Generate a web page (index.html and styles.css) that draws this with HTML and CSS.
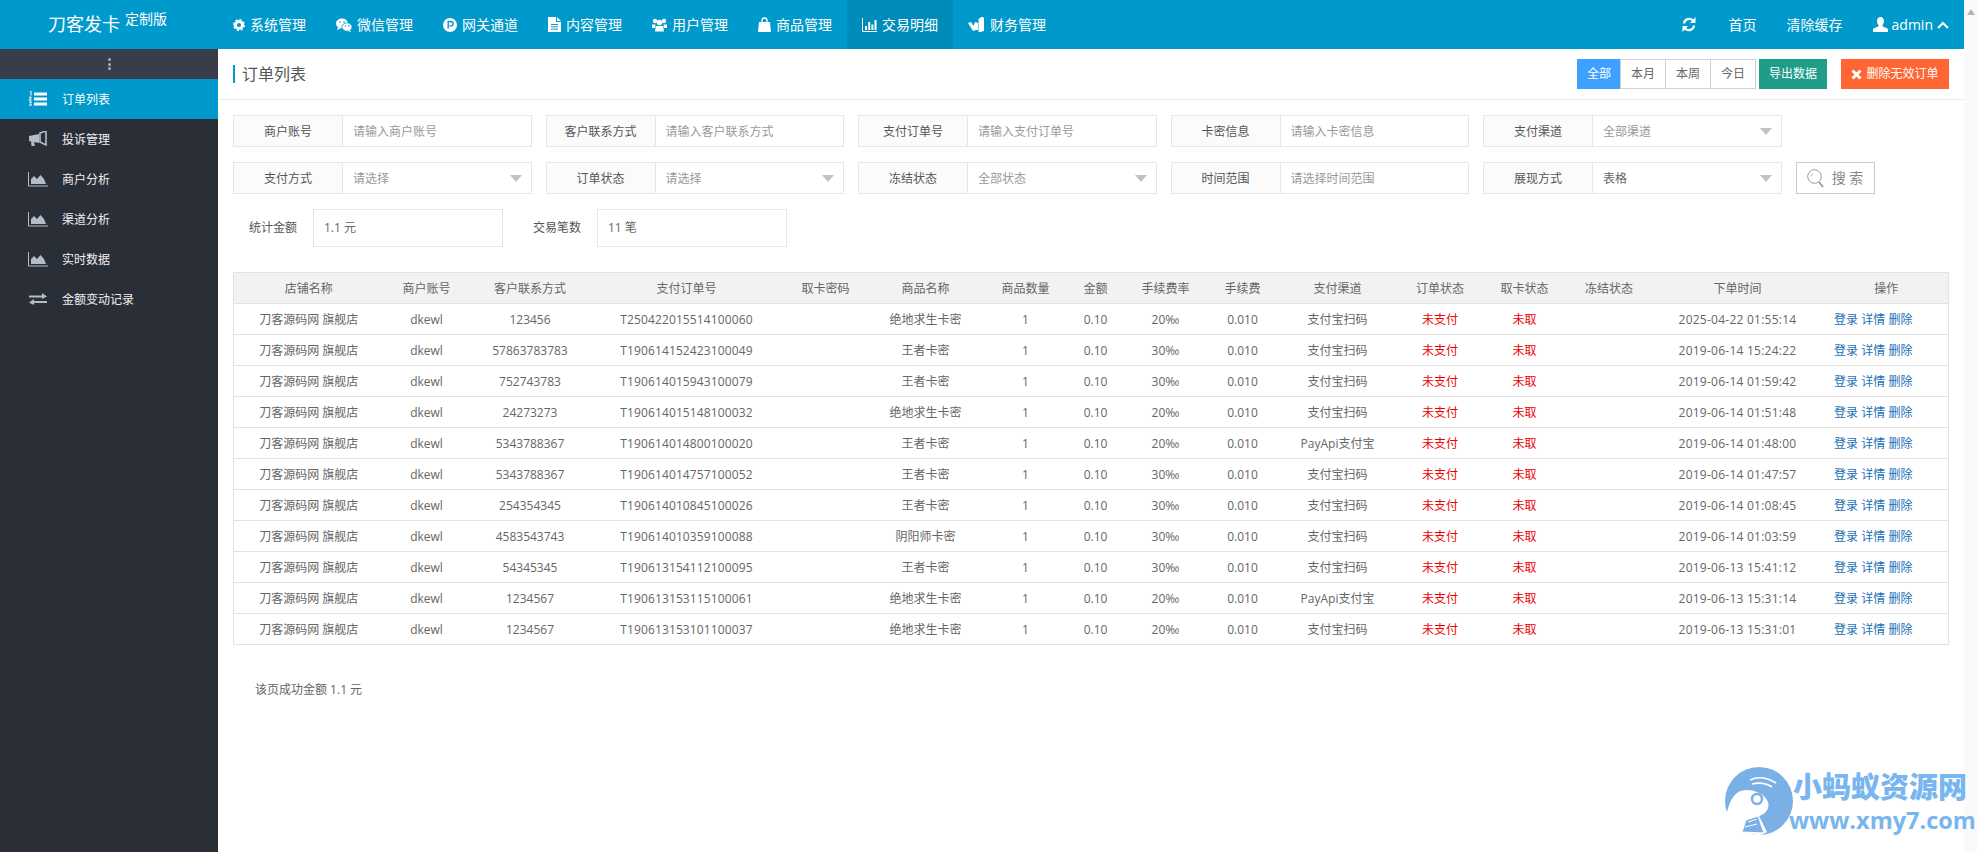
FILE: index.html
```html
<!DOCTYPE html>
<html lang="zh-CN">
<head>
<meta charset="utf-8">
<title>订单列表</title>
<link rel="stylesheet" href="styles.css">
</head>
<body>
<div class="page">
  <header class="topbar">
    <div class="logo"><span class="logo-name">刀客发卡</span><span class="logo-tag">定制版</span></div>
    <nav class="nav">
      <a class="nav-item"><svg class="nav-ico" width="12" height="14" viewBox="0 0 12 14"><circle cx="6" cy="7" r="3.6" fill="none" stroke="#fff" stroke-width="3"/><circle cx="6" cy="7" r="5.4" fill="none" stroke="#fff" stroke-width="1.2" stroke-dasharray="2.2 2"/></svg>系统管理</a>
      <a class="nav-item"><svg class="nav-ico" width="16" height="14" viewBox="0 0 16 14"><ellipse cx="6" cy="5.5" rx="6" ry="5" fill="#fff"/><path d="M2 9l-1 3 3.5-1.6z" fill="#fff"/><ellipse cx="11" cy="9" rx="5" ry="4.2" fill="#fff" stroke="#0099cc" stroke-width=".8"/><path d="M14 12l1 2-3-1z" fill="#fff"/><circle cx="4" cy="4" r=".8" fill="#0099cc"/><circle cx="8" cy="4" r=".8" fill="#0099cc"/><circle cx="9.5" cy="8" r=".7" fill="#0099cc"/><circle cx="12.8" cy="8" r=".7" fill="#0099cc"/></svg>微信管理</a>
      <a class="nav-item"><svg class="nav-ico" width="14" height="14" viewBox="0 0 14 14"><circle cx="7" cy="7" r="7" fill="#fff"/><path d="M5.2 10.5v-7h2.7a2.2 2.2 0 0 1 0 4.4H6.3" fill="none" stroke="#0099cc" stroke-width="1.4"/></svg>网关通道</a>
      <a class="nav-item"><svg class="nav-ico" width="13" height="15" viewBox="0 0 13 15"><path d="M0 0h8v5h5v10H0z" fill="#fff"/><path d="M9 0l4 4H9z" fill="#fff"/><path d="M3 7.500h7M3 9.800h7M3 12.100h7" stroke="#0099cc" stroke-width="1"/></svg>内容管理</a>
      <a class="nav-item"><svg class="nav-ico" width="15" height="14" viewBox="0 0 15 14"><circle cx="3" cy="3" r="2.200" fill="#fff"/><circle cx="12" cy="3" r="2.200" fill="#fff"/><circle cx="7.500" cy="4.500" r="2.800" fill="#fff"/><path d="M0 6.500h3.500L3 10H0zM15 6.500h-3.500l.5 3.500h3z" fill="#fff"/><path d="M3.800 8h7.400l.8 5.500H3z" fill="#fff"/></svg>用户管理</a>
      <a class="nav-item"><svg class="nav-ico" width="13" height="15" viewBox="0 0 13 15"><path d="M1 5h11l1 10H0z" fill="#fff"/><path d="M4 6V3.500a2.500 2.500 0 0 1 5 0V6" fill="none" stroke="#fff" stroke-width="1.300"/></svg>商品管理</a>
      <a class="nav-item is-active"><svg class="nav-ico" width="15" height="14" viewBox="0 0 15 14"><path d="M.5 0v13.500H15" fill="none" stroke="#fff"/><path d="M3 8h2v4H3zM6.200 4h2v8h-2zM9.400 6.500h2V12h-2zM12.500 2h2v10h-2z" fill="#fff"/></svg>交易明细</a>
      <a class="nav-item"><svg class="nav-ico" width="17" height="15" viewBox="0 0 17 15"><path d="M0 6l3-1 2.500 4L7 5l3 1v7H8L5 14z" fill="#fff"/><path d="M10.500 2l3-2h1.500l1 1v13l-3.500 1h-2z" fill="#fff"/></svg>财务管理</a>
    </nav>
    <div class="top-right">
      <svg class="refresh" width="14" height="15" viewBox="0 0 14 15"><path d="M2 6.500A5.200 5.200 0 0 1 11 3.500M12 8.500A5.200 5.200 0 0 1 3 11.500" fill="none" stroke="#fff" stroke-width="2.200"/><path d="M13.500 0v6h-5.500zM.5 15V9H6z" fill="#fff"/></svg>
      <a class="top-link">首页</a>
      <a class="top-link">清除缓存</a>
      <a class="top-user"><svg width="15" height="15" viewBox="0 0 15 15"><path d="M7.500 0C5.300 0 4 1.700 4 4c0 1.700.7 3 1.500 3.900v1.300L.5 11.500c-.4.300-.5.800-.5 3.500h15c0-2.700-.1-3.200-.5-3.500l-5-2.300V7.900C10.300 7 11 5.700 11 4c0-2.300-1.300-4-3.500-4z" fill="#fff"/></svg><span>admin</span><svg width="12" height="8" viewBox="0 0 12 8"><path d="M1 7l5-5 5 5" fill="none" stroke="#fff" stroke-width="2"/></svg></a>
    </div>
  </header>
  <div class="layout">
    <aside class="sidebar">
      <div class="side-toggle"><i></i><i></i><i></i></div>
      <a class="side-item is-current"><svg width="20" height="16" viewBox="0 0 20 16"><path d="M6 1.500h13v3H6zM6 6.500h13v3H6zM6 11.500h13v3H6z" fill="#fff"/><path d="M1.500 0h1.500v4.500M1 6.200h2.500L1 9h2.800M1 11h2.500l-1 1.500 1 1.600H1" fill="none" stroke="#fff" stroke-width="1"/></svg><span>订单列表</span></a>
      <a class="side-item"><svg width="20" height="16" viewBox="0 0 20 16"><path d="M1 5l10-2v9L1 10z" fill="#b4bcc6"/><path d="M3 10l3 .5 1 4.500H3.500z" fill="#b4bcc6"/><path d="M12 2l6-2v14l-6-3z" fill="none" stroke="#b4bcc6" stroke-width="1.600"/></svg><span>投诉管理</span></a>
      <a class="side-item"><svg width="20" height="16" viewBox="0 0 20 16"><path d="M.5 1v14H20" fill="none" stroke="#b4bcc6"/><path d="M3 13V8l3-3 3 3 3.500-4 3.500 4 2 5z" fill="#b4bcc6"/></svg><span>商户分析</span></a>
      <a class="side-item"><svg width="20" height="16" viewBox="0 0 20 16"><path d="M.5 1v14H20" fill="none" stroke="#b4bcc6"/><path d="M3 13V8l3-3 3 3 3.500-4 3.500 4 2 5z" fill="#b4bcc6"/></svg><span>渠道分析</span></a>
      <a class="side-item"><svg width="20" height="16" viewBox="0 0 20 16"><path d="M.5 1v14H20" fill="none" stroke="#b4bcc6"/><path d="M3 13V8l3-3 3 3 3.500-4 3.500 4 2 5z" fill="#b4bcc6"/></svg><span>实时数据</span></a>
      <a class="side-item"><svg width="20" height="16" viewBox="0 0 20 16"><path d="M1 4.500h13V2l5 3.500-5 2.500V6.500H1zM19 10H6V8l-5 3.500L6 14v-2h13z" fill="#b4bcc6"/></svg><span>金额变动记录</span></a>
    </aside>
    <main class="main">
      <div class="title-bar">
        <h1 class="title">订单列表</h1>
        <div class="title-actions">
          <div class="seg">
            <a class="seg-btn is-on">全部</a><a class="seg-btn">本月</a><a class="seg-btn">本周</a><a class="seg-btn">今日</a>
          </div>
          <a class="btn btn-export">导出数据</a>
          <a class="btn btn-del"><svg width="11" height="11" viewBox="0 0 11 11"><path d="M1.500 1.500l8 8M9.500 1.500l-8 8" stroke="#fff" stroke-width="3"/></svg>删除无效订单</a>
        </div>
      </div>
      <form class="filters">
        <div class="filter-row">
          <div class="field"><label>商户账号</label><input placeholder="请输入商户账号"></div>
          <div class="field"><label>客户联系方式</label><input placeholder="请输入客户联系方式"></div>
          <div class="field"><label>支付订单号</label><input placeholder="请输入支付订单号"></div>
          <div class="field"><label>卡密信息</label><input placeholder="请输入卡密信息"></div>
          <div class="field"><label>支付渠道</label><div class="select">全部渠道</div></div>
        </div>
        <div class="filter-row">
          <div class="field"><label>支付方式</label><div class="select">请选择</div></div>
          <div class="field"><label>订单状态</label><div class="select">请选择</div></div>
          <div class="field"><label>冻结状态</label><div class="select">全部状态</div></div>
          <div class="field"><label>时间范围</label><input placeholder="请选择时间范围"></div>
          <div class="field"><label>展现方式</label><div class="select is-value">表格</div></div>
          <a class="search-btn"><svg width="17" height="19" viewBox="0 0 17 19"><circle cx="7.500" cy="7.500" r="6.800" fill="none" stroke="#999" stroke-width="1"/><path d="M4 7.500a3.500 3.500 0 0 1 2-3" fill="none" stroke="#bbb"/><path d="M12 13l4 5" stroke="#999" stroke-width="1.800"/></svg><span>搜 索</span></a>
        </div>
        <div class="stats">
          <span class="stat-label">统计金额</span><div class="stat-box">1.1 元</div>
          <span class="stat-label">交易笔数</span><div class="stat-box">11 笔</div>
        </div>
      </form>
      <table class="orders">
        <colgroup>
          <col class="c1"><col class="c2"><col class="c3"><col class="c4"><col class="c5"><col class="c6"><col class="c7"><col class="c8"><col class="c9"><col class="c10"><col class="c11"><col class="c12"><col class="c13"><col class="c14"><col class="c15"><col class="c16">
        </colgroup>
        <thead>
          <tr><th>店铺名称</th><th>商户账号</th><th>客户联系方式</th><th>支付订单号</th><th>取卡密码</th><th>商品名称</th><th>商品数量</th><th>金额</th><th>手续费率</th><th>手续费</th><th>支付渠道</th><th>订单状态</th><th>取卡状态</th><th>冻结状态</th><th>下单时间</th><th>操作</th></tr>
        </thead>
        <tbody>
          <tr><td>刀客源码网 旗舰店</td><td>dkewl</td><td>123456</td><td class="num">T250422015514100060</td><td></td><td>绝地求生卡密</td><td>1</td><td>0.10</td><td>20‰</td><td>0.010</td><td>支付宝扫码</td><td class="red">未支付</td><td class="red">未取</td><td></td><td class="time">2025-04-22 01:55:14</td><td class="ops"><a>登录</a> <a>详情</a> <a>删除</a></td></tr>
          <tr><td>刀客源码网 旗舰店</td><td>dkewl</td><td>57863783783</td><td class="num">T190614152423100049</td><td></td><td>王者卡密</td><td>1</td><td>0.10</td><td>30‰</td><td>0.010</td><td>支付宝扫码</td><td class="red">未支付</td><td class="red">未取</td><td></td><td class="time">2019-06-14 15:24:22</td><td class="ops"><a>登录</a> <a>详情</a> <a>删除</a></td></tr>
          <tr><td>刀客源码网 旗舰店</td><td>dkewl</td><td>752743783</td><td class="num">T190614015943100079</td><td></td><td>王者卡密</td><td>1</td><td>0.10</td><td>30‰</td><td>0.010</td><td>支付宝扫码</td><td class="red">未支付</td><td class="red">未取</td><td></td><td class="time">2019-06-14 01:59:42</td><td class="ops"><a>登录</a> <a>详情</a> <a>删除</a></td></tr>
          <tr><td>刀客源码网 旗舰店</td><td>dkewl</td><td>24273273</td><td class="num">T190614015148100032</td><td></td><td>绝地求生卡密</td><td>1</td><td>0.10</td><td>20‰</td><td>0.010</td><td>支付宝扫码</td><td class="red">未支付</td><td class="red">未取</td><td></td><td class="time">2019-06-14 01:51:48</td><td class="ops"><a>登录</a> <a>详情</a> <a>删除</a></td></tr>
          <tr><td>刀客源码网 旗舰店</td><td>dkewl</td><td>5343788367</td><td class="num">T190614014800100020</td><td></td><td>王者卡密</td><td>1</td><td>0.10</td><td>20‰</td><td>0.010</td><td>PayApi支付宝</td><td class="red">未支付</td><td class="red">未取</td><td></td><td class="time">2019-06-14 01:48:00</td><td class="ops"><a>登录</a> <a>详情</a> <a>删除</a></td></tr>
          <tr><td>刀客源码网 旗舰店</td><td>dkewl</td><td>5343788367</td><td class="num">T190614014757100052</td><td></td><td>王者卡密</td><td>1</td><td>0.10</td><td>30‰</td><td>0.010</td><td>支付宝扫码</td><td class="red">未支付</td><td class="red">未取</td><td></td><td class="time">2019-06-14 01:47:57</td><td class="ops"><a>登录</a> <a>详情</a> <a>删除</a></td></tr>
          <tr><td>刀客源码网 旗舰店</td><td>dkewl</td><td>254354345</td><td class="num">T190614010845100026</td><td></td><td>王者卡密</td><td>1</td><td>0.10</td><td>30‰</td><td>0.010</td><td>支付宝扫码</td><td class="red">未支付</td><td class="red">未取</td><td></td><td class="time">2019-06-14 01:08:45</td><td class="ops"><a>登录</a> <a>详情</a> <a>删除</a></td></tr>
          <tr><td>刀客源码网 旗舰店</td><td>dkewl</td><td>4583543743</td><td class="num">T190614010359100088</td><td></td><td>阴阳师卡密</td><td>1</td><td>0.10</td><td>30‰</td><td>0.010</td><td>支付宝扫码</td><td class="red">未支付</td><td class="red">未取</td><td></td><td class="time">2019-06-14 01:03:59</td><td class="ops"><a>登录</a> <a>详情</a> <a>删除</a></td></tr>
          <tr><td>刀客源码网 旗舰店</td><td>dkewl</td><td>54345345</td><td class="num">T190613154112100095</td><td></td><td>王者卡密</td><td>1</td><td>0.10</td><td>30‰</td><td>0.010</td><td>支付宝扫码</td><td class="red">未支付</td><td class="red">未取</td><td></td><td class="time">2019-06-13 15:41:12</td><td class="ops"><a>登录</a> <a>详情</a> <a>删除</a></td></tr>
          <tr><td>刀客源码网 旗舰店</td><td>dkewl</td><td>1234567</td><td class="num">T190613153115100061</td><td></td><td>绝地求生卡密</td><td>1</td><td>0.10</td><td>20‰</td><td>0.010</td><td>PayApi支付宝</td><td class="red">未支付</td><td class="red">未取</td><td></td><td class="time">2019-06-13 15:31:14</td><td class="ops"><a>登录</a> <a>详情</a> <a>删除</a></td></tr>
          <tr><td>刀客源码网 旗舰店</td><td>dkewl</td><td>1234567</td><td class="num">T190613153101100037</td><td></td><td>绝地求生卡密</td><td>1</td><td>0.10</td><td>20‰</td><td>0.010</td><td>支付宝扫码</td><td class="red">未支付</td><td class="red">未取</td><td></td><td class="time">2019-06-13 15:31:01</td><td class="ops"><a>登录</a> <a>详情</a> <a>删除</a></td></tr>
        </tbody>
      </table>
      <p class="page-sum">该页成功金额 1.1 元</p>
    </main>
  </div>
</div>
<div class="scrollbar"><i class="scroll-up"></i></div>
<div class="watermark">
  <svg class="wm-logo" width="70" height="70" viewBox="0 0 70 70"><circle cx="35" cy="35" r="34" fill="#7ab0e6"/><path d="M2 50C6 32 12 24 22 24c8 0 18 3 22 12 2 6-2 12-9 14l8 16c-3 2-6 3-8 3C20 69 8 62 2 50z" fill="#fff"/><circle cx="33" cy="33" r="5" fill="none" stroke="#7ab0e6" stroke-width="2.500"/><path d="M26 14c8-4 16-3 26 3M28 18c8-2 14-1 20 3" fill="none" stroke="#fff" stroke-width="1.600"/><path d="M18 66l4-12 12-4 6 17zM24 56l9-3M21 61l12-3" fill="#7ab0e6" stroke="#fff"/></svg>
  <div class="wm-text"><div class="wm-cn">小蚂蚁资源网</div><div class="wm-en">www.xmy7.com</div></div>
</div>
</body>
</html>
```

FILE: styles.css
```css
* { box-sizing: border-box; }
html, body { height: 852px; }
body {
  margin: 0;
  display: flex;
  overflow: hidden;
  background: #fff;
  color: #666;
  font: 12px/1.4 "Open Sans", "Noto Sans CJK SC", sans-serif;
}
a { text-decoration: none; color: inherit; }
.page { width: 1964px; height: 852px; display: flex; flex-direction: column; }
.scrollbar { width: 13px; height: 852px; background: #fafafa; padding: 9px 0 0 3px; }
.scroll-up { display: block; width: 0; height: 0; border: 4.500px solid transparent; border-top: 0; border-bottom: 6px solid #b5b5b5; }

/* top bar */
.topbar { height: 49px; flex: none; display: flex; align-items: stretch; background: #0099cc; color: #fff; font-size: 14px; }
.logo { width: 218px; flex: none; padding-left: 48px; display: flex; align-items: flex-start; }
.logo-name { font-size: 18px; line-height: 49px; }
.logo-tag { font-size: 14px; line-height: 20px; margin: 9px 0 0 5px; }
.nav { display: flex; }
.nav-item { display: flex; align-items: center; padding: 0 15px; }
.nav-ico { margin-right: 5px; flex: none; }
.nav-item.is-active { background: #008cba; }
.top-right { margin-left: auto; display: flex; align-items: center; gap: 30px; padding-right: 15px; }
.refresh { margin-right: 3px; }
.top-user { display: flex; align-items: center; gap: 4px; }

/* layout */
.layout { flex: 1; display: flex; min-height: 0; }
.sidebar { width: 218px; flex: none; background: #2a2e37; color: #f0f0f0; }
.side-toggle { height: 30px; background: #393d49; display: flex; flex-direction: column; align-items: center; justify-content: center; gap: 1.500px; }
.side-toggle i { width: 3px; height: 3px; border-radius: 50%; background: #aab; }
.side-item { height: 40px; display: flex; align-items: center; gap: 14px; padding-left: 28px; }
.side-item svg { flex: none; }
.side-item span { padding-top: 2px; }
.side-item.is-current { background: #0099cc; color: #fff; }

/* main */
.main { flex: 1; min-width: 0; padding: 0 15px; }
.title-bar { height: 51px; margin: 0 -15px; padding: 0 15px; border-bottom: 1px solid #ebebeb; display: flex; align-items: center; justify-content: space-between; }
.title { margin: 0; padding-left: 7px; border-left: 2px solid #0099cc; height: 18px; font-size: 16px; line-height: 18px; font-weight: 400; color: #555; }
.title-actions { display: flex; align-items: center; }
.seg { display: flex; }
.seg-btn { width: 46px; height: 30px; line-height: 28px; text-align: center; border: 1px solid #d2d2d2; margin-left: -1px; background: #fff; color: #666; }
.seg-btn.is-on { width: 44px; margin-left: 0; border-color: #3fa1ff; background: #3fa1ff; color: #fff; }
.btn { height: 30px; line-height: 30px; text-align: center; color: #fff; display: flex; align-items: center; justify-content: center; }
.btn-export { width: 68px; margin-left: 3px; background: #1f9d8b; }
.btn-del { width: 108px; margin-left: 14px; background: #ff6633; gap: 4px; }

/* filters */
.filters { padding-top: 15px; }
.filter-row { display: flex; gap: 14px; margin-bottom: 15px; }
.field { width: 298.500px; height: 32px; display: flex; border: 1px solid #e6e6e6; }
.field label { width: 109px; flex: none; background: #fbfbfb; border-right: 1px solid #e6e6e6; text-align: center; line-height: 32px; color: #555; }
.field input, .select { flex: 1; min-width: 0; border: 0; outline: 0; padding: 0 10px; font: inherit; line-height: 32px; color: #999; background: #fff; position: relative; }
.field input { padding-top: 2px; }
.field input::placeholder { color: #999; opacity: 1; }
.select::after { content: ""; position: absolute; right: 9px; top: 12px; border: 6px solid transparent; border-top: 7px solid #c2c2c2; border-bottom: 0; }
.select.is-value { color: #666; }
.search-btn { width: 79px; height: 32px; margin-left: 0; border: 1px solid #c9c9c9; display: flex; align-items: center; justify-content: center; gap: 8px; font-size: 14px; color: #888; }
.stats { display: flex; height: 38px; align-items: center; padding-left: 16px; }
.stat-label { width: 49px; color: #555; }
.stat-box { width: 190px; height: 38px; margin: 0 30px 0 15px; padding-left: 10px; line-height: 36px; border: 1px solid #e6e6e6; color: #666; }

/* table */
.orders { width: 1715px; margin-top: 25px; table-layout: fixed; border-collapse: collapse; border: 1px solid #e2e2e2; }
.orders th, .orders td { height: 31px; padding: 2px 0 0; text-align: center; font-weight: 400; white-space: nowrap; border-bottom: 1px solid #e2e2e2; color: #666; }
.orders th { background: #f2f2f2; }
.orders td.red { color: #e00; }
.orders td.num { letter-spacing: .13px; }
.orders td.time { letter-spacing: .25px; }
.orders td.ops { padding-right: 26px; }
.ops a { color: #1b6fb8; }
.c1 { width: 150px; } .c2 { width: 86px; } .c3 { width: 121px; } .c4 { width: 192px; }
.c5 { width: 86px; } .c6 { width: 114px; } .c7 { width: 86px; } .c8 { width: 54px; }
.c9 { width: 86px; } .c10 { width: 68px; } .c11 { width: 122px; } .c12 { width: 83px; }
.c13 { width: 86px; } .c14 { width: 83px; } .c15 { width: 174px; } .c16 { width: 124px; }
.page-sum { margin: 36px 0 0 22px; line-height: 18px; color: #666; }

/* watermark */
.watermark { position: absolute; left: 1724px; top: 766px; width: 250px; height: 72px; display: flex; }
.wm-logo { flex: none; }
.wm-text { margin-left: -5px; }
.wm-cn { font: 900 29px/38px "Noto Sans CJK SC", sans-serif; color: #79b5ee; padding-left: 4px; white-space: nowrap; }
.wm-en { font: 700 23.500px/32px "Open Sans", sans-serif; color: #79b5ee; white-space: nowrap; }
```
